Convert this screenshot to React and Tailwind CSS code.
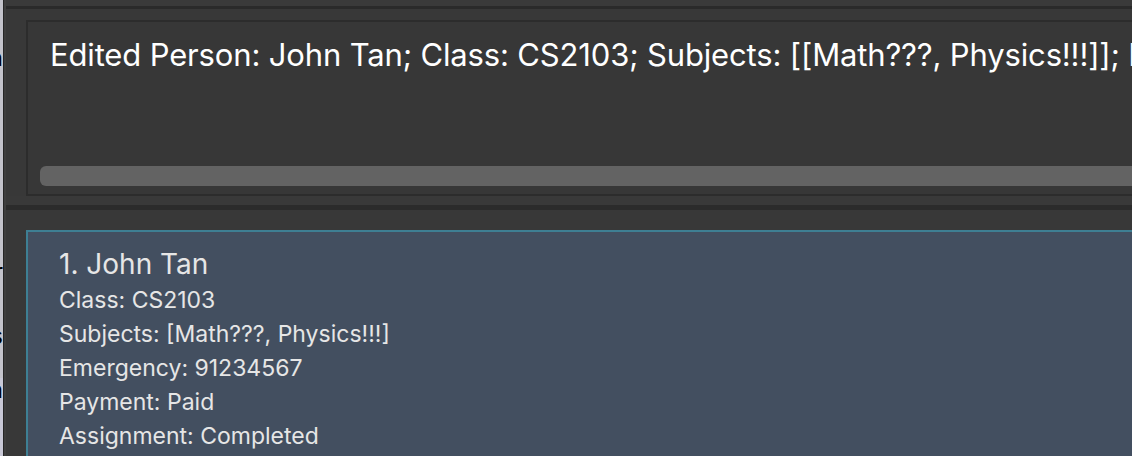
import React from 'react';

const person = {
  name: 'John Tan',
  className: 'CS2103',
  subjects: ['Math???', 'Physics!!!'],
  emergency: '91234567',
  payment: 'Paid',
  assignment: 'Completed',
};

function WindowBehind() {
  // sliver of another window peeking out on the far left
  return (
    <div className="flex h-full w-[3px] shrink-0 flex-col overflow-hidden bg-[#c3c3cb] font-['Inter',sans-serif] text-[24px] leading-none text-black">
      <div className="h-[46px] shrink-0" />
      <div className="flex justify-end">n</div>
      <div className="h-[190px] shrink-0" />
      <div className="flex justify-end">r</div>
      <div className="h-[40px] shrink-0" />
      <div className="flex justify-end">s</div>
      <div className="h-[30px] shrink-0 bg-[#c3c3cb]" />
      <div className="flex flex-1 flex-col bg-[#c8c8d6]">
        <div className="flex justify-end">a</div>
      </div>
    </div>
  );
}

function ResultBox() {
  const text = `Edited Person: ${person.name}; Class: ${person.className}; Subjects: [[${person.subjects.join(', ')}]]; Emergency: ${person.emergency}; Payment: ${person.payment}; Assignment: ${person.assignment}`;
  return (
    <div className="bg-[#383838] pl-5 pt-[11px]">
      <div className="flex h-[176px] flex-col border-2 border-r-0 border-[#2c2c2c] bg-[#373737] pb-2 pl-3">
        <p className="flex-1 overflow-hidden whitespace-nowrap pl-[10px] pt-[14px] text-[31px] leading-[38px] tracking-[-0.15px] text-white">
          {text}
        </p>
        <div className="h-5 rounded-l-[6px] bg-[#636363]" />
      </div>
    </div>
  );
}

function PersonCard({ index, p }) {
  return (
    <div className="flex-1 border-l-2 border-t-2 border-[#3e7f93] bg-[#434f60] pl-[31px] pt-[14px] text-[#e6e6e6]">
      <p className="text-[28px] leading-[36px]">
        {index}. {p.name}
      </p>
      <div className="pt-[1px] text-[23px] leading-[34px]">
        <p>Class: {p.className}</p>
        <p>Subjects: [{p.subjects.join(', ')}]</p>
        <p>Emergency: {p.emergency}</p>
        <p>Payment: {p.payment}</p>
        <p>Assignment: {p.assignment}</p>
      </div>
    </div>
  );
}

export default function App() {
  return (
    <div className="flex h-[456px] w-[1132px] overflow-hidden bg-[#3a3a3a] font-['Inter',sans-serif]">
      <WindowBehind />
      <div className="w-px shrink-0 bg-[#262626]" />
      <div className="w-[2px] shrink-0 bg-[#3e3e3e]" />
      <div className="flex min-w-0 flex-1 flex-col">
        <div className="h-[6px] bg-[#3a3a3a]" />
        <div className="h-[3px] bg-[#2a2a2a]" />
        <ResultBox />
        <div className="h-[9px] bg-[#393939]" />
        <div className="h-[5px] bg-[#2b2b2b]" />
        <div className="flex flex-1 flex-col bg-[#383838] pl-5 pt-5">
          <PersonCard index={1} p={person} />
        </div>
      </div>
    </div>
  );
}
